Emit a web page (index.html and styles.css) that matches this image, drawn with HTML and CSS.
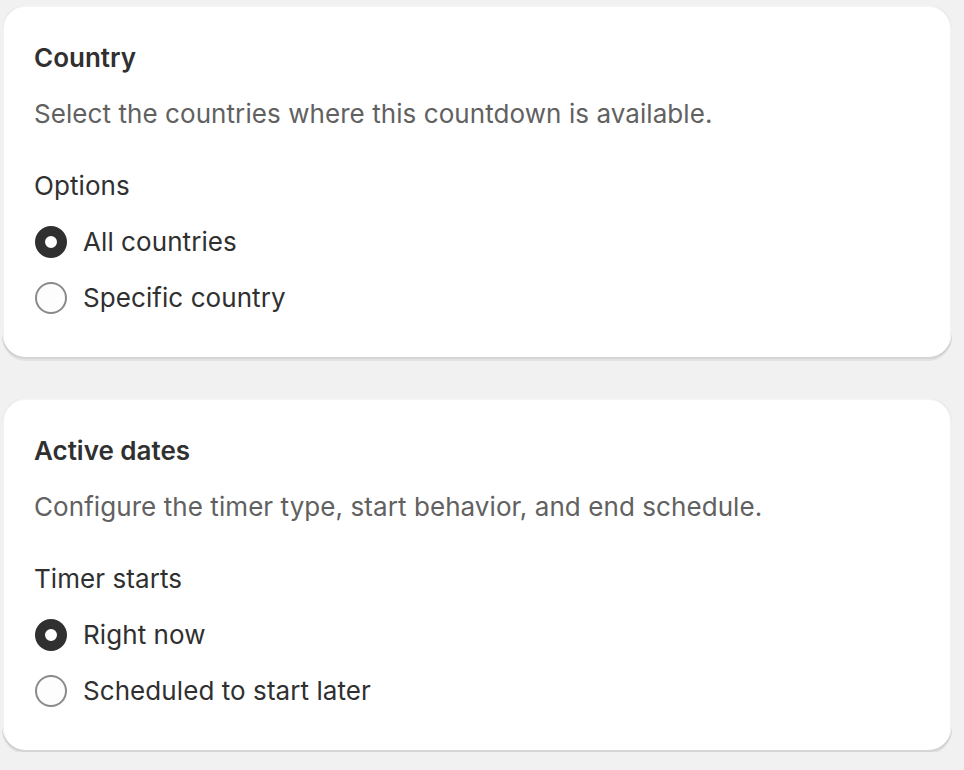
FILE: index.html
```html
<!doctype html>
<html lang="en">
  <head>
    <meta charset="UTF-8" />
    <meta name="viewport" content="width=device-width, initial-scale=1.0" />
    <title>Countdown settings</title>
    <link rel="stylesheet" href="styles.css">
  </head>
  <body>
    <div class="page">
      <section class="card">
        <h2 class="card-title">Country</h2>
        <p class="card-text">Select the countries where this countdown is available.</p>
        <fieldset class="choice-list">
          <legend class="choice-title">Options</legend>
          <label class="choice">
            <input type="radio" name="country" class="radio" checked />
            <span>All countries</span>
          </label>
          <label class="choice">
            <input type="radio" name="country" class="radio" />
            <span>Specific country</span>
          </label>
        </fieldset>
      </section>

      <section class="card">
        <h2 class="card-title">Active dates</h2>
        <p class="card-text">Configure the timer type, start behavior, and end schedule.</p>
        <fieldset class="choice-list">
          <legend class="choice-title">Timer starts</legend>
          <label class="choice">
            <input type="radio" name="start" class="radio" checked />
            <span>Right now</span>
          </label>
          <label class="choice">
            <input type="radio" name="start" class="radio" />
            <span>Scheduled to start later</span>
          </label>
        </fieldset>
      </section>
    </div>
  </body>
</html>
```

FILE: styles.css
```css
body {
  margin: 0;
  font-family: Inter, "Noto Sans", sans-serif;
  background-color: #f1f1f1;
  color: #303030;
}
.page {
  display: flex;
  flex-direction: column;
  gap: 39px;
  width: 950px;
  padding: 5px 0 0 2px;
}
.card {
  background: #ffffff;
  border-radius: 24px;
  padding: 33px 32px 37px;
  box-shadow:
    0 2px 0 rgba(26, 26, 26, 0.07),
    inset 0 -2px 0 rgba(0, 0, 0, 0.16),
    inset 2px 0 0 rgba(0, 0, 0, 0.05),
    inset -2px 0 0 rgba(0, 0, 0, 0.05),
    inset 0 2px 0 rgba(0, 0, 0, 0.04);
}
.card-title {
  margin: 0;
  font-size: 26px;
  line-height: 40px;
  font-weight: 600;
}
.card-text {
  margin: 16px 0 0;
  font-size: 26px;
  line-height: 40px;
  letter-spacing: 0.07px;
  color: #616161;
}
.choice-list {
  margin: 32px 0 0;
  padding: 0;
  border: none;
  display: flex;
  flex-direction: column;
  gap: 8px;
}
.choice-title {
  padding: 0;
  font-size: 26px;
  line-height: 40px;
  letter-spacing: 0.07px;
  margin-bottom: 12px;
}
.choice {
  display: flex;
  align-items: center;
  gap: 16px;
  height: 48px;
  font-size: 26px;
  line-height: 40px;
  letter-spacing: 0.07px;
  cursor: pointer;
}
.radio {
  appearance: none;
  margin: 0 0 0 1px;
  width: 32px;
  height: 32px;
  border-radius: 50%;
  border: 2px solid #8a8a8a;
  background: #fdfdfd;
  flex-shrink: 0;
}
.radio:checked {
  border: 10px solid #303030;
  background: #ffffff;
}
```
